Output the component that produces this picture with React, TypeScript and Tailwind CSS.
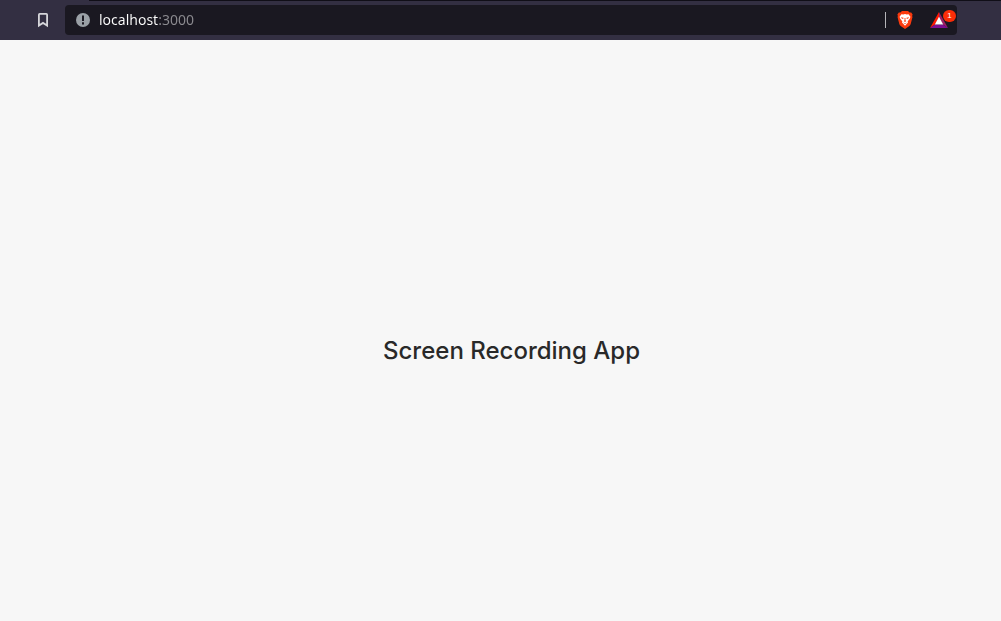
import React from "react";

const tabs = [1, 2, 3, 4, 5, 6, 7, 8];

function BookmarkIcon() {
  return (
    <svg width="12" height="16" viewBox="0 0 12 16" fill="none" stroke="#d6d6da" strokeWidth="1.8" aria-hidden="true">
      <path d="M1.9 2.7Q1.9 1.9 2.7 1.9H9.3Q10.1 1.9 10.1 2.7V13.5L6 10.9L1.9 13.5Z" />
    </svg>
  );
}

function InfoIcon() {
  return (
    <svg width="14" height="14" viewBox="0 0 14 14" aria-hidden="true">
      <circle cx="7" cy="7" r="7" fill="#9aa0a6" />
      <path d="M6 2.6H8V8H6ZM6 9.2H8V11.4H6Z" fill="#1b1922" />
    </svg>
  );
}

function ShieldIcon() {
  return (
    <svg width="16" height="18" viewBox="0 0 16 18" aria-hidden="true">
      <path d="M5 0H11L12.6 1.6L14.2 1.5L15.6 3.4L15.1 5L15.5 6L13.7 13Q13.3 14.4 12 15.3L8 18L4 15.3Q2.7 14.4 2.3 13L.5 6L.9 5L.4 3.4L1.8 1.5L3.4 1.6Z" fill="#fb3a0e" />
      <path d="M4.5 3.2L6.3 3.5L8 3L9.7 3.5L11.5 3.2L13.4 5.7L12.9 7.5L10.6 10.4L11 11.5L8 14.8L5 11.5L5.4 10.4L3.1 7.5L2.6 5.7Z" fill="#fff" />
      <path d="M3.9 6.2L6.5 6.8L6.2 7.9L4.8 7.5ZM12.1 6.2L9.5 6.8L9.8 7.9L11.2 7.5ZM7.5 7H8.5L8.4 9.2L9.3 10.1L8 11L6.7 10.1L7.6 9.2ZM5.9 11.4L8 12.3L10.1 11.4L8 13Z" fill="#fb3a0e" />
    </svg>
  );
}

function RewardsIcon() {
  return (
    <svg width="18" height="16" viewBox="0 0 18 16" aria-hidden="true">
      <path d="M9 0L0 16L5 12.6L9 5.5Z" fill="#ff1a00" />
      <path d="M9 0L18 16L13 12.6L9 5.5Z" fill="#9e1f63" />
      <path d="M0 16H18L13 12.6H5Z" fill="#7d0f91" />
      <path d="M9 4.8L13.2 12.6H4.8Z" fill="#fff" />
    </svg>
  );
}

export default function App() {
  return (
    <div className="flex min-h-screen flex-col bg-[#f7f7f7]">
      <header className="bg-[#332f42]">
        <div className="flex h-px overflow-hidden pl-[89px]" aria-hidden="true">
          {tabs.map((tab) => (
            <div key={tab} className="w-32 shrink-0 -mr-px border-r border-[#494553] bg-[#100e17]" />
          ))}
        </div>
        <div className="flex h-[39px] items-center pb-px pl-9 pr-11">
          <button type="button" aria-label="Bookmark this tab" className="mr-[15px] flex h-6 w-[14px] items-center justify-center">
            <BookmarkIcon />
          </button>
          <div className="flex h-[30px] min-w-0 flex-1 items-center rounded bg-[#1a1821] pl-[11px]">
            <button type="button" aria-label="View site information" className="shrink-0">
              <InfoIcon />
            </button>
            {/* The clipped gradient shows the host bright and the port dimmed. */}
            <input
              type="text"
              aria-label="Address"
              defaultValue="localhost:3000"
              spellCheck={false}
              className="ml-[9px] h-5 min-w-0 flex-1 bg-[linear-gradient(to_right,#ffffff_60px,#8c8b90_60px)] bg-clip-text font-['Noto_Sans',sans-serif] text-[14px] leading-5 text-transparent caret-white outline-none"
            />
            <div className="h-4 w-px bg-[#b5b4b9]" />
            <button type="button" aria-label="Brave Shields" className="ml-[11px] shrink-0">
              <ShieldIcon />
            </button>
            <button type="button" aria-label="Brave Rewards" className="relative ml-[17px] mr-[9px] shrink-0">
              <RewardsIcon />
              <span className="absolute -right-2 -top-[2px] flex h-3 w-[13px] items-center justify-center rounded-full bg-[#fb2d08] font-['Liberation_Sans',sans-serif] text-[8px] leading-3 text-white">
                1
              </span>
            </button>
          </div>
        </div>
      </header>
      <main className="flex flex-1 items-center justify-center pl-[22px] pt-10">
        <h1 className="font-['Inter',sans-serif] text-[24px] font-medium leading-8 text-[#292929]">Screen Recording App</h1>
      </main>
    </div>
  );
}
